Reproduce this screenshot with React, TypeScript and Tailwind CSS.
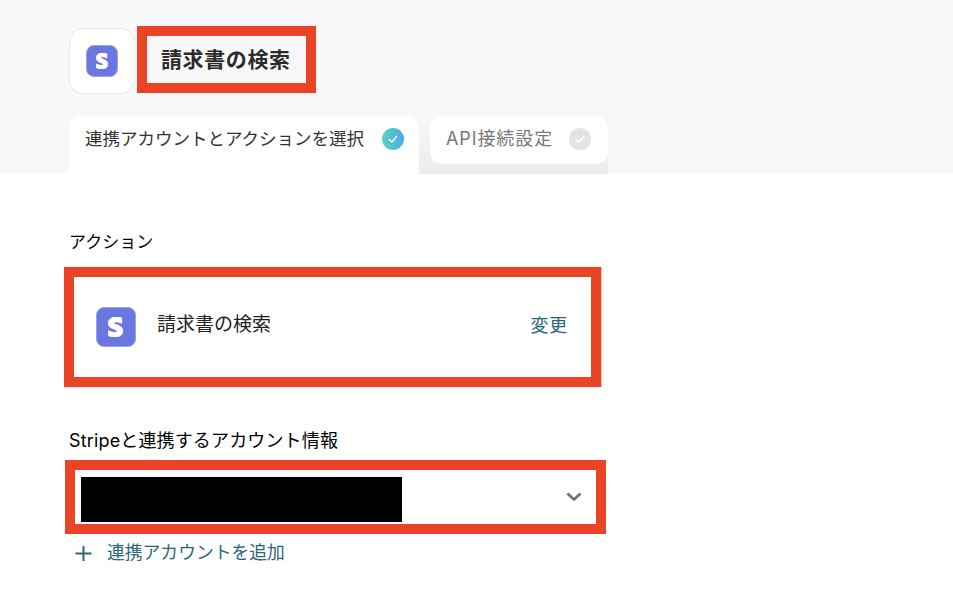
import { FaStripeS } from "react-icons/fa";

const font = { fontFamily: '"Inter", "Noto Sans CJK JP", sans-serif' };

function StripeIcon({ size }: { size: number }) {
  return (
    <div
      className="flex shrink-0 items-center justify-center rounded-[8px] border border-[#9aa2ee] bg-[#6b77e0] text-white"
      style={{ width: size, height: size }}
    >
      <FaStripeS
        preserveAspectRatio="none"
        stroke="currentColor"
        strokeWidth={24}
        style={{ width: size * 0.38, height: size * 0.5 }}
      />
    </div>
  );
}

function Check({ muted }: { muted?: boolean }) {
  return (
    <div
      className={`flex h-[22px] w-[22px] items-center justify-center rounded-full ${
        muted ? "bg-[#e4e4e4]" : "bg-gradient-to-r from-[#62d2b8] to-[#4ba9ec]"
      }`}
    >
      <svg width="12" height="12" viewBox="0 0 12 12" fill="none" stroke="white" strokeWidth="1.3">
        <path d="M2 6.2 L5 9 L10 3" />
      </svg>
    </div>
  );
}

export default function App() {
  return (
    <div className="h-[595px] w-[953px] overflow-hidden bg-white" style={font}>
      <div className="h-[173px] bg-[#f8f8f8] pl-[69px]">
        <div className="flex pt-[26px]">
          <div className="mt-[2px] flex h-[66px] w-[66px] items-center justify-center rounded-[14px] border border-[#e8e8e8] bg-white">
            <StripeIcon size={32} />
          </div>
          <div className="ml-[2px] flex h-[67px] w-[179px] items-center border-[10px] border-[#ec4226] pl-[14px] text-[21px] font-bold tracking-[0.6px] text-[#2b2b2b]">
            請求書の検索
          </div>
        </div>
        <div className="mt-[22px] flex h-[58px] w-[539px] bg-gradient-to-b from-[#f8f8f8] to-[#ececec]">
          <div className="flex h-[58px] w-[350px] items-start rounded-t-[12px] bg-white pl-[16px] pt-[11px]">
            <span className="text-[17.5px] leading-[24px] text-[#333]">連携アカウントとアクションを選択</span>
            <div className="ml-[18px] mt-[1px]">
              <Check />
            </div>
          </div>
          <div className="ml-[11px] flex h-[48px] w-[178px] items-start rounded-[12px] bg-white pl-[16px] pt-[11px]">
            <span className="text-[18px] leading-[24px] tracking-[0.9px] text-[#777]">API接続設定</span>
            <div className="ml-[16px] mt-[1px]">
              <Check muted />
            </div>
          </div>
        </div>
      </div>

      <div className="pl-[69px] pt-[57px]">
        <div className="text-[17px] leading-[24px] text-black">アクション</div>
        <div className="-ml-[5px] mt-[13px] flex h-[120px] w-[537px] items-center justify-between border-[10px] border-[#ec4226] pl-[22px] pr-[23px] shadow-[1px_0_1px_#ccc]">
          <div className="flex items-center gap-[21px]">
            <StripeIcon size={40} />
            <span className="-translate-y-[2px] text-[19px] text-[#222]">請求書の検索</span>
          </div>
          <span className="-translate-y-[2px] text-[18px] tracking-[0.8px] text-[#2b6580]">変更</span>
        </div>

        <div className="mt-[42px] text-[18px] leading-[24px] tracking-[0.15px] text-black">Stripeと連携するアカウント情報</div>
        <div className="-ml-[4px] mt-[7px] flex h-[74px] w-[541px] items-center justify-between border-[10px] border-[#ec4226] pl-[6px] pr-[14px]">
          <div className="mt-[4px] h-[45px] w-[321px] bg-black" />
          <svg width="16" height="10" viewBox="0 0 16 10" fill="none" stroke="#707070" strokeWidth="2.6">
            <path d="M1.5 1.5 L8 7.5 L14.5 1.5" />
          </svg>
        </div>
        <div className="mt-[6px] flex items-center text-[#2b6580]">
          <svg className="ml-[6px]" width="17" height="17" viewBox="0 0 17 17" fill="none" stroke="#2b6580" strokeWidth="2">
            <path d="M8.5 1 V16 M0.5 8.5 H16.5" />
          </svg>
          <span className="ml-[15px] text-[17.8px] leading-[26px]">連携アカウントを追加</span>
        </div>
      </div>
    </div>
  );
}
